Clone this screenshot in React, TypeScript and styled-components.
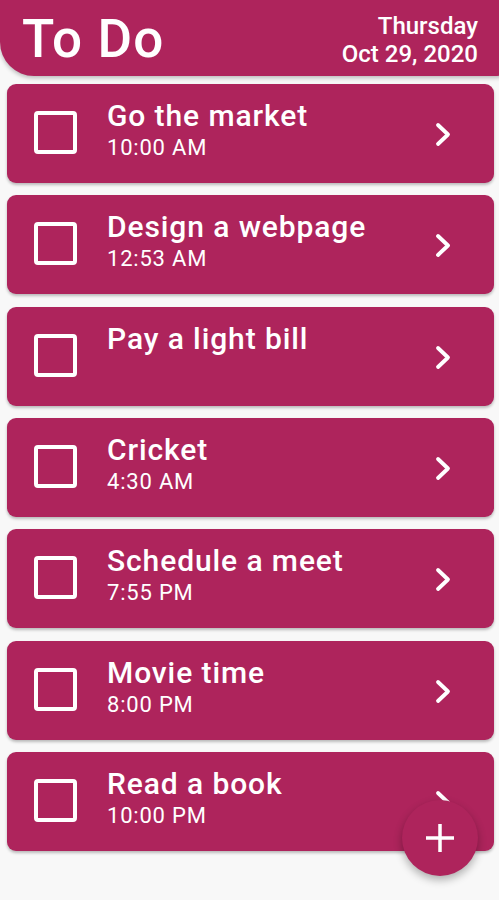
import React from "react";
import styled, { createGlobalStyle } from "styled-components";

const Global = createGlobalStyle`
  html, body { margin: 0; padding: 0; background: #f8f8f8; }
  body { font-family: Roboto, "Noto Sans", sans-serif; }
`;

const PINK = "#ae245c";

const Page = styled.div`
  width: 499px;
  height: 900px;
  position: relative;
  overflow: hidden;
  background: #f8f8f8;
`;

const Header = styled.header`
  height: 76px;
  margin-right: -30px;
  background: ${PINK};
  border-bottom-left-radius: 34px;
  border-bottom-right-radius: 34px;
  box-shadow: 0 2px 4px rgba(0, 0, 0, 0.25);
  display: flex;
  align-items: flex-start;
  justify-content: space-between;
  padding: 0 51px 0 22px;
  color: #fff;
`;

const Title = styled.h1`
  margin: 9px 0 0;
  font-size: 53px;
  font-weight: 500;
  line-height: 60px;
  letter-spacing: 1.2px;
`;

const DateBox = styled.div`
  margin-top: 12px;
  text-align: right;
  font-size: 24px;
  font-weight: 500;
  line-height: 28px;
`;

const List = styled.div`
  display: flex;
  flex-direction: column;
  gap: 12.33px;
  padding: 8px 5px 0 7px;
`;

const Card = styled.div`
  height: 99px;
  background: ${PINK};
  border-radius: 9px;
  box-shadow: 0 2px 3px rgba(0, 0, 0, 0.25);
  display: flex;
  align-items: flex-start;
  color: #fff;
`;

const Check = styled.div`
  width: 35px;
  height: 35px;
  border: 4px solid #fff;
  border-radius: 4px;
  margin: 27px 0 0 27px;
  flex: none;
`;

const Texts = styled.div`
  flex: 1;
  margin: 14px 0 0 30px;
  display: flex;
  flex-direction: column;
`;

const ItemTitle = styled.div`
  font-size: 30px;
  font-weight: 500;
  line-height: 36px;
  letter-spacing: 0.9px;
`;

const ItemTime = styled.div`
  font-size: 22px;
  font-weight: 400;
  line-height: 28px;
  min-height: 28px;
  letter-spacing: 0.8px;
`;

const Chevron = styled.svg`
  margin: 38px 41px 0 0;
  flex: none;
`;

const Fab = styled.button`
  position: absolute;
  left: 402px;
  top: 800px;
  width: 76px;
  height: 76px;
  border-radius: 50%;
  border: none;
  background: ${PINK};
  box-shadow: 0 4px 8px rgba(0, 0, 0, 0.3);
  display: flex;
  align-items: center;
  justify-content: center;
  padding: 0;
`;

const items = [
  { t: "Go the market", s: "10:00 AM" },
  { t: "Design a webpage", s: "12:53 AM" },
  { t: "Pay a light bill", s: "" },
  { t: "Cricket", s: "4:30 AM" },
  { t: "Schedule a meet", s: "7:55 PM" },
  { t: "Movie time", s: "8:00 PM" },
  { t: "Read a book", s: "10:00 PM" },
];

export default function App() {
  return (
    <Page>
      <Global />
      <Header>
        <Title>To Do</Title>
        <DateBox>
          <div>Thursday</div>
          <div>Oct 29, 2020</div>
        </DateBox>
      </Header>
      <List>
        {items.map((it) => (
          <Card key={it.t}>
            <Check />
            <Texts>
              <ItemTitle>{it.t}</ItemTitle>
              <ItemTime>{it.s}</ItemTime>
            </Texts>
            <Chevron width="20" height="26" viewBox="0 0 20 26">
              <path d="M5 3 L15 12.5 L5 22" fill="none" stroke="#fff" strokeWidth="3.8" strokeLinecap="round" strokeLinejoin="round" />
            </Chevron>
          </Card>
        ))}
      </List>
      <Fab aria-label="add">
        <svg width="30" height="30" viewBox="0 0 30 30">
          <path d="M15 1 V29 M1 15 H29" stroke="#fff" strokeWidth="3.5" />
        </svg>
      </Fab>
    </Page>
  );
}
